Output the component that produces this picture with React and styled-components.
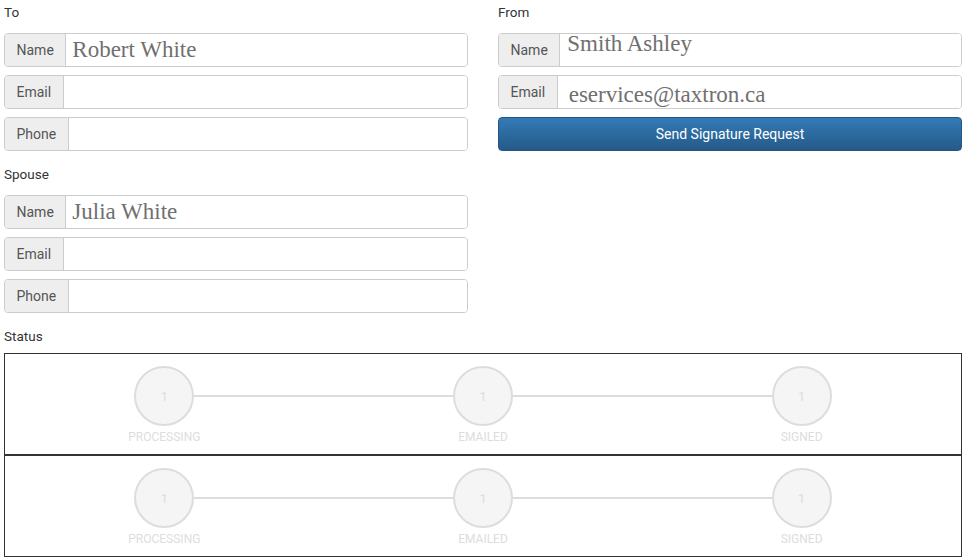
import React from "react";
import styled, {createGlobalStyle} from "styled-components";

const GlobalStyle = createGlobalStyle`
  html, body {
    margin: 0;
    padding: 0;
    background: #fff;
  }
  body {
    font-family: Roboto, "Liberation Sans", sans-serif;
    font-size: 13.5px;
    color: #333;
  }
  * {
    box-sizing: border-box;
  }
`;

const Page = styled.div`
  width: 966px;
  padding: 4px 4px 0;
`;

const Columns = styled.div`
  display: grid;
  grid-template-columns: 1fr 1fr;
  column-gap: 30px;
  align-items: start;
`;

const Column = styled.div`
  display: flex;
  flex-direction: column;
`;

const SectionLabel = styled.div`
  line-height: 16px;
  margin-bottom: ${p => p.$space || 13}px;
  margin-top: ${p => (p.$first ? 0 : 15)}px;
`;

const Fields = styled.div`
  display: flex;
  flex-direction: column;
  gap: 8px;
`;

const Group = styled.div`
  display: flex;
  height: 34px;
  border: 1px solid #ccc;
  border-radius: 4px;
  overflow: hidden;
`;

const Addon = styled.span`
  display: flex;
  align-items: center;
  padding: 0 11.5px 1px;
  background: #eee;
  color: #555;
  font-size: 14px;
  border-right: 1px solid #ccc;
`;

const Field = styled.input`
  flex: 1;
  min-width: 0;
  height: 100%;
  border: 0;
  outline: none;
  background: #fff;
  font-family: "Liberation Serif", "Times New Roman", serif;
  font-size: 23px;
  color: #707070;
  padding: ${p => (p.$shift < 0 ? `0 6px ${-p.$shift * 2}px` : `${(p.$shift || 0) * 2}px 6px 0`)};
  padding-left: ${p => p.$indent || 6}px;
`;

const SendButton = styled.button`
  height: 34px;
  border: 1px solid #245580;
  border-radius: 4px;
  background: linear-gradient(to bottom, #337ab7 0, #265a88 100%);
  color: #fff;
  font-family: Roboto, "Liberation Sans", sans-serif;
  font-size: 14px;
  cursor: pointer;
`;

const StatusList = styled.div`
  display: flex;
  flex-direction: column;
`;

const StatusBox = styled.div`
  display: grid;
  grid-template-columns: repeat(3, 1fr);
  height: 102px;
  border: 1px solid #333;
  padding: 12px 0 10px;
`;

const Step = styled.div`
  display: flex;
  flex-direction: column;
  align-items: stretch;
`;

const Track = styled.div`
  display: flex;
  align-items: center;
  height: 60px;
`;

const Connector = styled.div`
  flex: 1;
  height: 2px;
  background: ${p => (p.$hidden ? "transparent" : "#ddd")};
`;

const Circle = styled.div`
  width: 60px;
  height: 60px;
  border-radius: 50%;
  border: 2px solid #ddd;
  background: #f5f5f5;
  color: #ddd;
  font-size: 13.5px;
  display: flex;
  align-items: center;
  justify-content: center;
`;

const StepName = styled.div`
  margin-top: 4px;
  line-height: 14px;
  text-align: center;
  font-size: 12px;
  color: #ddd;
  text-transform: uppercase;
`;

const InputRow = ({label, value, ...rest}) => (
  <Group>
    <Addon>{label}</Addon>
    <Field type="text" defaultValue={value} {...rest} />
  </Group>
);

const steps = ["Processing", "Emailed", "Signed"];

const Stepper = () => (
  <StatusBox>
    {steps.map((s, i) => (
      <Step key={s}>
        <Track>
          <Connector $hidden={i === 0} />
          <Circle>1</Circle>
          <Connector $hidden={i === steps.length - 1} />
        </Track>
        <StepName>{s}</StepName>
      </Step>
    ))}
  </StatusBox>
);

const App = () => (
  <Page>
    <GlobalStyle />
    <Columns>
      <Column>
        <SectionLabel $first>To</SectionLabel>
        <Fields>
          <InputRow label="Name" value="Robert White" />
          <InputRow label="Email" value="" />
          <InputRow label="Phone" value="" />
        </Fields>
        <SectionLabel>Spouse</SectionLabel>
        <Fields>
          <InputRow label="Name" value="Julia White" />
          <InputRow label="Email" value="" />
          <InputRow label="Phone" value="" />
        </Fields>
      </Column>
      <Column>
        <SectionLabel $first>From</SectionLabel>
        <Fields>
          <InputRow label="Name" value="Smith Ashley" $shift={-6} $indent={7} />
          <InputRow label="Email" value="eservices@taxtron.ca" $shift={2.5} $indent={11} />
          <SendButton>Send Signature Request</SendButton>
        </Fields>
      </Column>
    </Columns>
    <SectionLabel $space={9}>Status</SectionLabel>
    <StatusList>
      <Stepper />
      <Stepper />
    </StatusList>
  </Page>
);

export default App;
